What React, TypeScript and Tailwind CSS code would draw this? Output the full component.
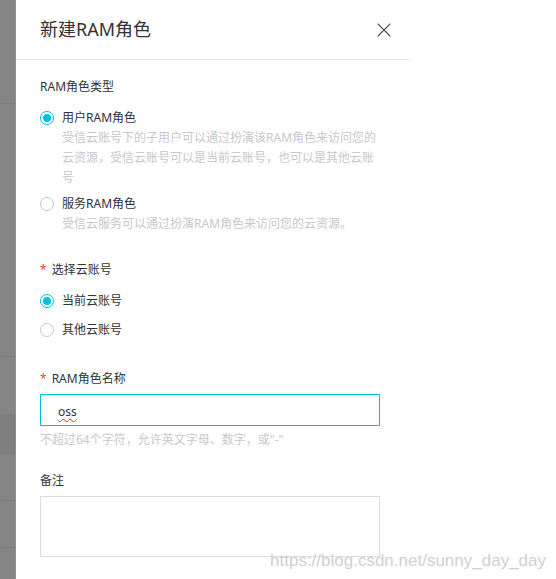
import { X } from "lucide-react";

const font = { fontFamily: '"Noto Sans", "Noto Sans CJK SC", sans-serif' };

function Radio({ checked, label }: { checked?: boolean; label: string }) {
  return (
    <div className="flex h-5 items-center">
      {checked ? (
        <span className="flex h-[14px] w-[14px] items-center justify-center rounded-full border border-[#00c1de] bg-white">
          <span className="h-2 w-2 rounded-full bg-[#00c1de]" />
        </span>
      ) : (
        <span className="h-[14px] w-[14px] rounded-full border border-[#c8c8c8] bg-white" />
      )}
      <span className="ml-2 text-[12px] text-[#333]">{label}</span>
    </div>
  );
}

function Label({ text, required }: { text: string; required?: boolean }) {
  return (
    <div className="flex h-5 items-center text-[12px] text-[#333]">
      {required && <span className="mr-[5px] text-[#f04134]">*</span>}
      {text}
    </div>
  );
}

export default function App() {
  return (
    <div className="relative flex h-[579px] w-full bg-white" style={font}>
      {/* dimmed page behind the drawer */}
      <div className="flex w-4 shrink-0 flex-col border-r border-[#8f8f8f] bg-[#858585]">
        <div className="h-[104px] border-b border-[#7b7b7b]" />
        <div className="h-[253px] border-b border-[#7b7b7b]" />
        <div className="h-[57px]" />
        <div className="h-[40px] border-b border-[#7b7b7b] bg-[#7f7f7f]" />
        <div className="h-[47px] border-b border-[#7b7b7b]" />
        <div className="h-[47px] border-b border-[#7b7b7b]" />
      </div>

      <div className="flex w-[394px] shrink-0 flex-col">
        <div className="flex h-[60px] items-center justify-between border-b border-[#e8e8e8] pl-6 pr-[14px]">
          <h2 className="text-[18px] text-[#333]">新建RAM角色</h2>
          <X className="h-6 w-6 text-[#555]" strokeWidth={1.1} />
        </div>

        <div className="flex flex-col pl-6 pt-[17px]">
          <Label text="RAM角色类型" />

          <div className="mt-[11px]">
            <Radio checked label="用户RAM角色" />
            <p className="w-[340px] pl-[22px] text-[12px] leading-5 text-[#c8c8c8]">
              受信云账号下的子用户可以通过扮演该RAM角色来访问您的云资源，受信云账号可以是当前云账号，也可以是其他云账号
            </p>
          </div>

          <div className="mt-[6px]">
            <Radio label="服务RAM角色" />
            <p className="pl-[22px] text-[12px] leading-5 text-[#c8c8c8]">
              受信云服务可以通过扮演RAM角色来访问您的云资源。
            </p>
          </div>

          <div className="mt-[26px]">
            <Label text="选择云账号" required />
          </div>
          <div className="mt-[11px] flex flex-col gap-[9px]">
            <Radio checked label="当前云账号" />
            <Radio label="其他云账号" />
          </div>

          <div className="mt-[29px]">
            <Label text="RAM角色名称" required />
          </div>
          <div className="mt-[5px] flex h-[32px] w-[340px] items-center border border-[#00c1de] pl-[17px] pt-[3px] text-[12px] text-[#333]">
            <span className="underline decoration-[#e03030] decoration-wavy decoration-1 underline-offset-2">oss</span>
          </div>
          <p className="mt-[4px] text-[12px] leading-5 text-[#c8c8c8]">
            不超过64个字符，允许英文字母、数字，或"-"
          </p>

          <div className="mt-[21px]">
            <Label text="备注" />
          </div>
          <div className="mt-[5px] h-[61px] w-[340px] border border-[#dcdcdc]" />
        </div>
      </div>

      <div className="flex-1" />

      <span className="absolute right-[10px] top-[551px] text-[17px] leading-5 text-[#d0d0d0]" style={{ fontFamily: '"Liberation Sans", sans-serif' }}>
        https://blog.csdn.net/sunny_day_day
      </span>
    </div>
  );
}
